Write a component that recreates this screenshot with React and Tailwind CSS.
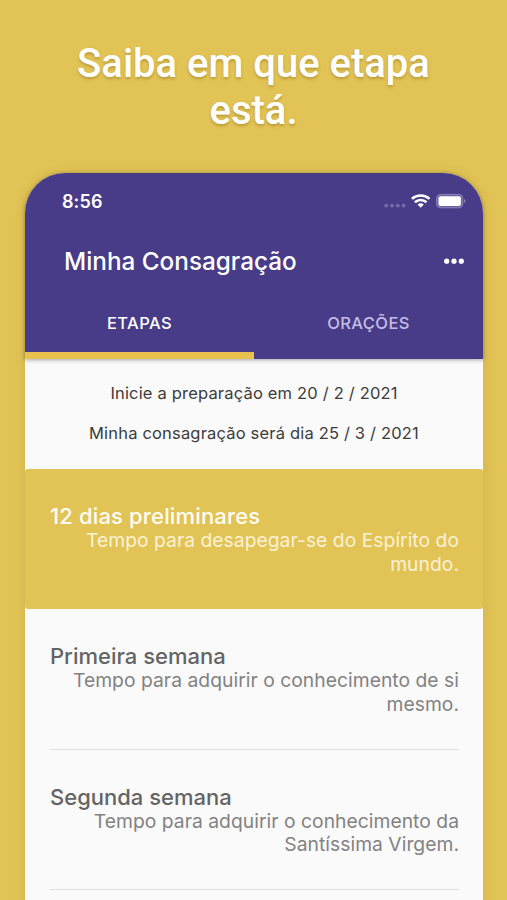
const stages = [
  {
    title: '12 dias preliminares',
    lines: ['Tempo para desapegar-se do Espírito do', 'mundo.'],
    active: true,
  },
  {
    title: 'Primeira semana',
    lines: ['Tempo para adquirir o conhecimento de si', 'mesmo.'],
  },
  {
    title: 'Segunda semana',
    lines: ['Tempo para adquirir o conhecimento da', 'Santíssima Virgem.'],
  },
];

function StatusIcons() {
  return (
    <svg width="84" height="16" viewBox="0 0 84 16" fill="none" aria-hidden="true">
      <g fill="#766bad">
        <circle cx="4.2" cy="12.6" r="1.9" />
        <circle cx="10" cy="12.6" r="1.9" />
        <circle cx="15.8" cy="12.6" r="1.9" />
        <circle cx="21.6" cy="12.6" r="1.9" />
      </g>
      <g stroke="#fff" strokeWidth="2.6">
        <path d="M29.9 5.9a13 13 0 0 1 17.6 0" />
        <path d="M32.9 9.3a8.4 8.4 0 0 1 11.6 0" />
      </g>
      <path d="M35.6 11.5a4.8 4.8 0 0 1 6.2 0L38.7 14.8z" fill="#fff" />
      <rect x="54.6" y="1.4" width="26.2" height="13.4" rx="4" fill="#6d62a3" stroke="#8c84bd" strokeWidth="1" />
      <rect x="56.5" y="3.3" width="22.4" height="9.6" rx="2" fill="#fff" />
      <path d="M82 6.1c1.9.8 1.9 3.2 0 4z" fill="#8c84bd" />
    </svg>
  );
}

function Stage({ title, lines, active }) {
  return (
    <li
      className={
        active
          ? 'h-[140px] rounded-[3px] bg-[#e2c355] pt-[35px] pr-[24px] pl-[25px]'
          : 'h-[140.5px] pr-[24px] pl-[25px]'
      }
    >
      <div className={active ? '' : 'h-full border-b border-[#dedede] pt-[35.4px]'}>
        <h2
          className={`text-[22px] leading-[25px] font-medium whitespace-nowrap ${
            active ? 'tracking-[0.15px] text-[#fffdf5]' : 'text-[#646464]'
          }`}
        >
          {title}
        </h2>
        <p
          className={`text-right text-[19.3px] leading-[23.5px] tracking-[0.03px] whitespace-nowrap ${
            active ? 'text-[#fbf2d5]' : 'text-[#828282]'
          }`}
        >
          {lines[0]}
          <br />
          {lines[1]}
        </p>
      </div>
    </li>
  );
}

export default function App() {
  return (
    <div className="flex h-[900px] w-[507px] flex-col overflow-hidden bg-[#e2c355] font-['Inter',sans-serif]">
      <h1 className="h-[173px] shrink-0 pt-[40px] text-center font-['Roboto',sans-serif] text-[40px] leading-[47px] font-medium text-white [text-shadow:0_2px_3px_rgba(110,85,10,0.35)]">
        Saiba em que etapa
        <br />
        está.
      </h1>
      <main className="ml-[25px] h-[760px] w-[458px] shrink-0 rounded-t-[40px] bg-[#fafafa] shadow-[0_0_12px_rgba(90,70,20,0.13)]">
        <header className="relative h-[186px] rounded-t-[40px] bg-[#483c88] text-white shadow-[0_1px_4px_rgba(0,0,0,0.35)]">
          <div className="flex h-[56px] items-center justify-between pr-[17px] pl-[37px]">
            <span className="text-[18px] font-semibold tracking-[0.1px]">8:56</span>
            <StatusIcons />
          </div>
          <div className="flex h-[65px] items-center justify-between pr-[19px] pl-[39px]">
            <span className="text-[24.3px] font-medium">Minha Consagração</span>
            <svg width="20" height="8" viewBox="0 0 20 8" fill="#fff" aria-hidden="true">
              <circle cx="2.7" cy="3.2" r="2.6" />
              <circle cx="10" cy="3.2" r="2.6" />
              <circle cx="17.3" cy="3.2" r="2.6" />
            </svg>
          </div>
          <div className="grid h-[65px] grid-cols-2 text-center text-[16.5px] leading-[58px] font-medium tracking-[0.4px]">
            <div className="border-b-[7px] border-[#e8c24c]">ETAPAS</div>
            <div className="text-[#c5bde4]">ORAÇÕES</div>
          </div>
        </header>
        <div className="h-[110px] pt-[14px] text-center text-[16.5px] leading-[40px] tracking-[0.18px] text-[#3c3c3c]">
          <p>Inicie a preparação em 20 / 2 / 2021</p>
          <p>Minha consagração será dia 25 / 3 / 2021</p>
        </div>
        <ul>
          {stages.map((stage) => (
            <Stage key={stage.title} {...stage} />
          ))}
        </ul>
      </main>
    </div>
  );
}
